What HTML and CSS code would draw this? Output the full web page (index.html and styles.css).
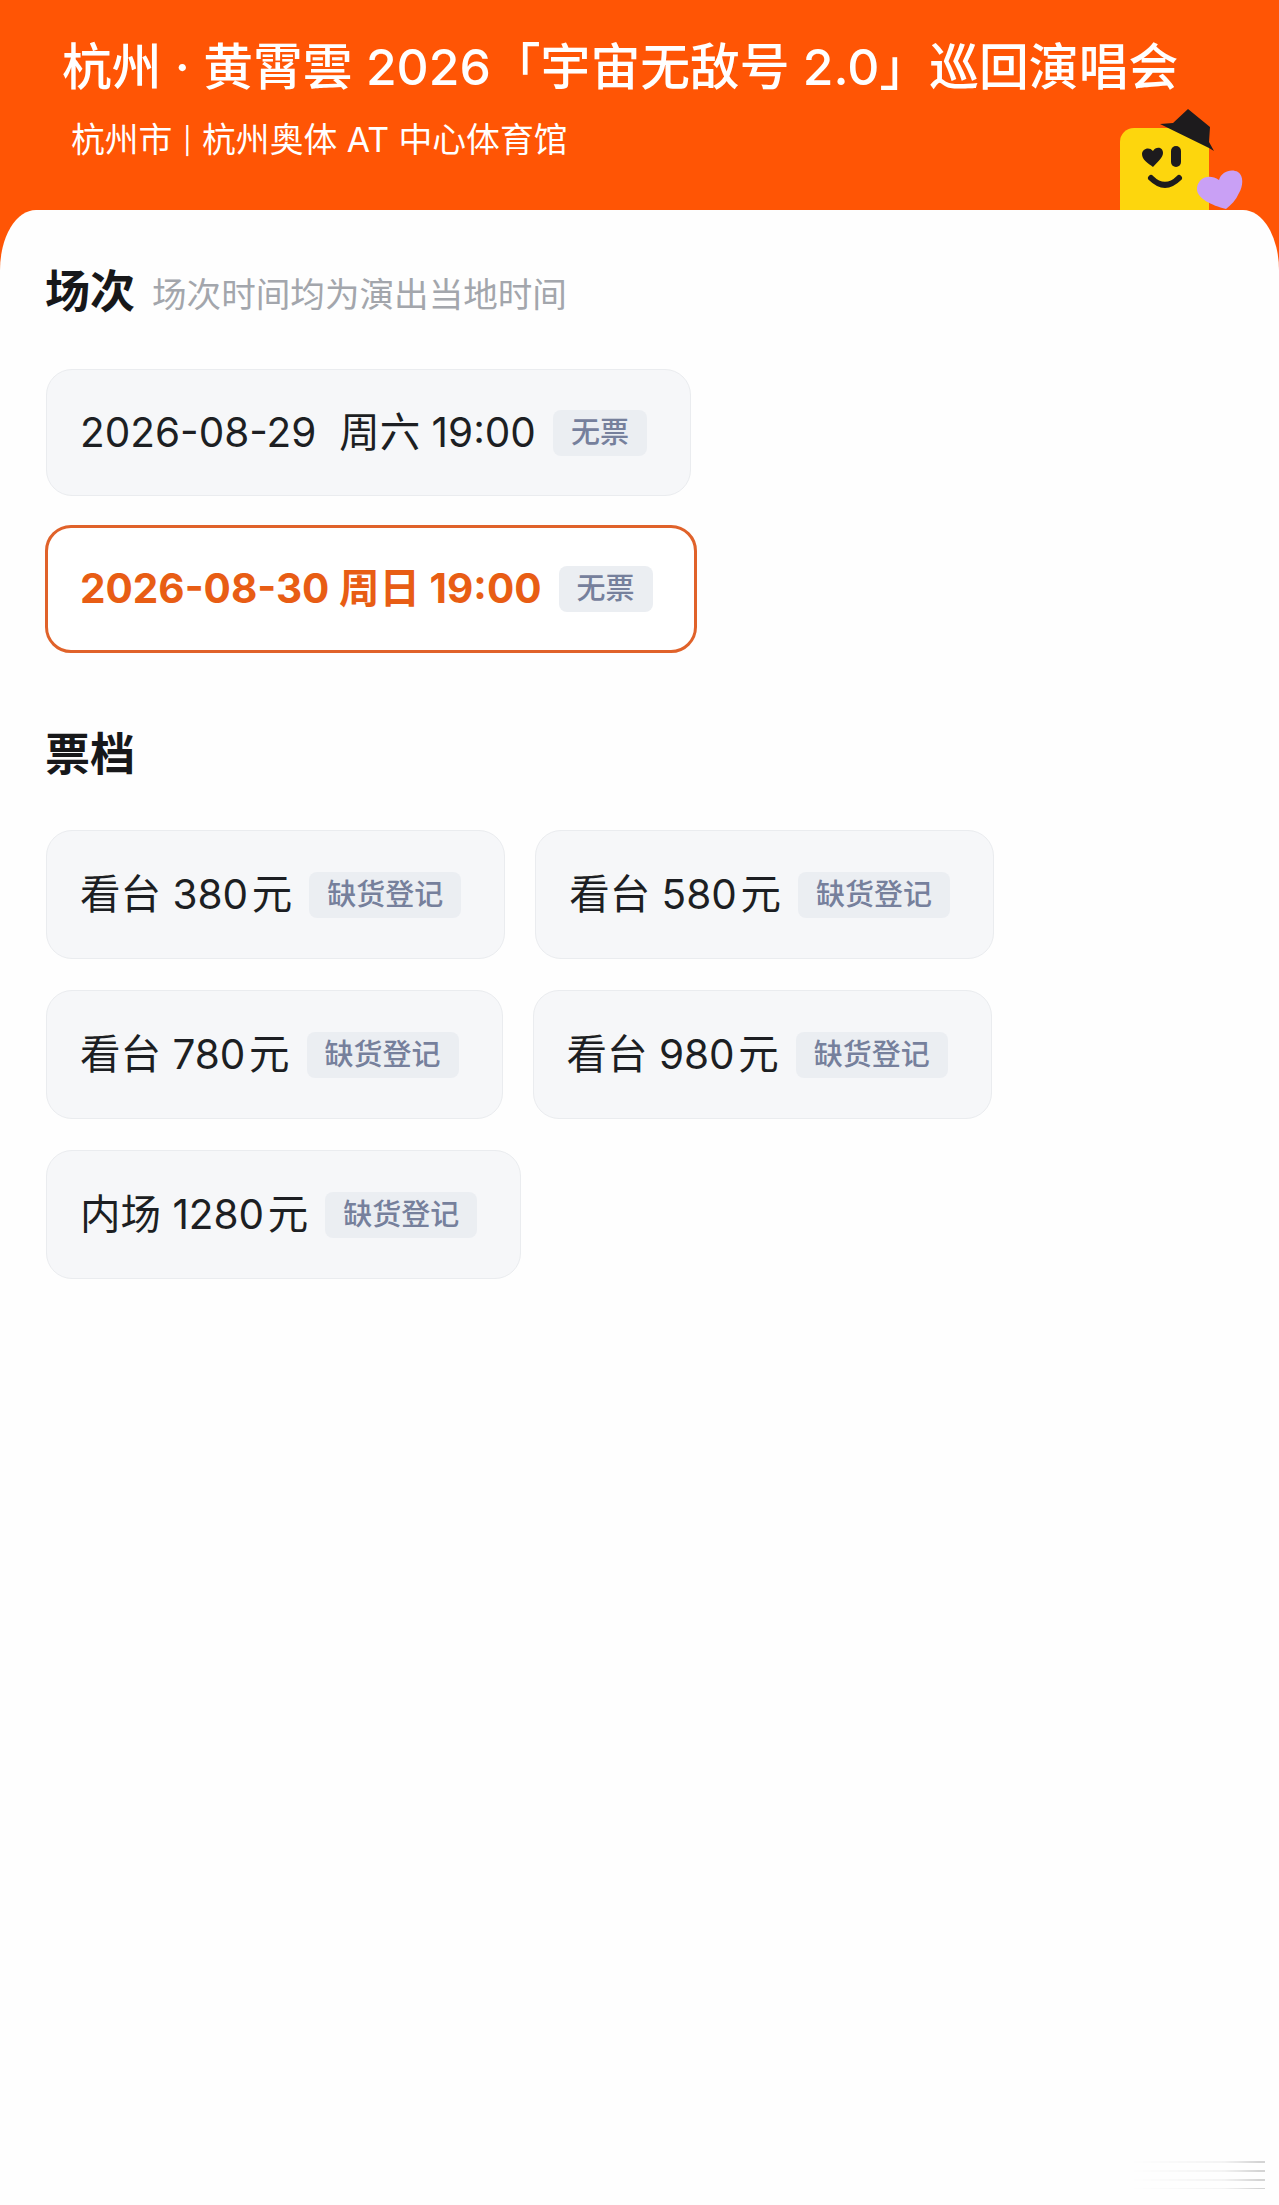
FILE: index.html
```html
<!DOCTYPE html>
<html lang="zh-CN">
<head>
    <meta charset="UTF-8">
    <meta name="viewport" content="width=device-width, initial-scale=1.0">
    <title>杭州 · 黄霄雲 2026「宇宙无敌号 2.0」巡回演唱会</title>
    <link rel="stylesheet" href="styles.css">
</head>
<body>
<div class="header">
    <h1 class="header-title">杭州 · 黄霄雲 2026「宇宙无敌号 2.0」巡回演唱会</h1>
    <p class="header-venue">杭州市 <span class="divider">|</span> 杭州奥体 AT 中心体育馆</p>
    <svg class="mascot" viewBox="0 0 124 110" aria-hidden="true">
        <rect x="1" y="20" width="89" height="110" rx="14" fill="#fdd60d"/>
        <path d="M41 16 L54 15 L69 1 L91 19 L90 34 L95 43 L90 40 Z" fill="#1d1b1d"/>
        <path d="M34 59 C29 55 23 52 23 46 C23 41 30 38 34 43 C37 38 44 39 44 45 C44 50 38 54 34 59 Z" fill="#1d1b1d"/>
        <rect x="52" y="38" width="10" height="21" rx="5" fill="#1d1b1d"/>
        <path d="M32 70 Q46 84 60 70" fill="none" stroke="#1d1b1d" stroke-width="6" stroke-linecap="round"/>
        <path d="M107 101 C92 97 77 90 78 80 C79 70 90 65 100 72 C102 64 112 60 119 64 C125 68 124 78 120 85 C117 92 112 97 107 101 Z" fill="#c9a0f5"/>
    </svg>
</div>

<div class="panel">
    <div class="section-head">
        <h2>场次</h2>
        <span class="section-note">场次时间均为演出当地时间</span>
    </div>
    <div class="session-list">
        <div class="option">
            <span class="option-text">2026-08-29&nbsp; 周六 19:00</span>
            <span class="tag">无票</span>
        </div>
        <div class="option selected">
            <span class="option-text">2026-08-30 周日 19:00</span>
            <span class="tag">无票</span>
        </div>
    </div>

    <div class="section-head tickets-head">
        <h2>票档</h2>
    </div>
    <div class="ticket-list">
        <div class="option">
            <span class="option-text">看台 380&#8202;元</span>
            <span class="tag">缺货登记</span>
        </div>
        <div class="option">
            <span class="option-text">看台 580&#8202;元</span>
            <span class="tag">缺货登记</span>
        </div>
        <div class="option">
            <span class="option-text">看台 780&#8202;元</span>
            <span class="tag">缺货登记</span>
        </div>
        <div class="option">
            <span class="option-text">看台 980&#8202;元</span>
            <span class="tag">缺货登记</span>
        </div>
        <div class="option">
            <span class="option-text">内场 1280&#8202;元</span>
            <span class="tag">缺货登记</span>
        </div>
    </div>
    <div class="watermark"></div>
</div>
</body>
</html>
```

FILE: styles.css
```css
body {
    font-family: 'Inter', 'Noto Sans CJK SC', sans-serif;
    margin: 0;
    padding: 0;
    background-color: #ff5505;
    color: #1d1f23;
    overflow: hidden;
}
.header {
    height: 210px;
    box-sizing: border-box;
    padding: 37px 0 0 62px;
    position: relative;
    color: #fff;
}
.header-title {
    margin: 0;
    font-size: 49.8px;
    line-height: 60px;
    font-weight: 500;
    white-space: nowrap;
}
.header-venue {
    margin: 20px 0 0 9px;
    font-size: 33.8px;
    line-height: 46px;
    font-weight: 400;
    white-space: nowrap;
}
.divider {
    margin: 0 1px;
    font-size: 26px;
    vertical-align: 2px;
}
.mascot {
    position: absolute;
    left: 1119px;
    top: 108px;
    width: 124px;
    height: 110px;
    overflow: hidden;
}
.panel {
    position: relative;
    height: 1995px;
    box-sizing: border-box;
    padding: 52px 0 0 46px;
    background-color: #fefefe;
    border-radius: 36px 36px 0 0 / 60px 60px 0 0;
}
.section-head {
    display: flex;
    align-items: center;
    height: 60px;
    margin-left: -1px;
}
.section-head h2 {
    margin: 0;
    font-size: 45px;
    line-height: 60px;
    font-weight: 700;
    color: #17181a;
}
.section-note {
    margin-left: 17px;
    font-size: 34.6px;
    color: #a3a6ac;
}
.session-list {
    margin-top: 47px;
    display: flex;
    flex-direction: column;
    align-items: flex-start;
    gap: 29px;
}
.tickets-head {
    margin-top: 72px;
}
.ticket-list {
    margin-top: 45px;
    display: flex;
    flex-wrap: wrap;
    gap: 31px 30px;
}
.option {
    display: flex;
    align-items: center;
    height: 129px;
    box-sizing: border-box;
    padding: 0 43px 0 33px;
    background-color: #f6f7f9;
    border: 1px solid #eaecef;
    border-radius: 26px;
    white-space: nowrap;
}
.session-list .option {
    height: 127px;
}
.option-text {
    font-size: 40.5px;
    padding-bottom: 7px;
}
.tag {
    margin-left: 17px;
    padding: 0 18px;
    height: 46px;
    line-height: 46px;
    font-size: 29px;
    font-weight: 500;
    color: #76809c;
    background-color: #ebeef2;
    border-radius: 8px;
}
.session-list .selected {
    height: 128px;
    margin-left: -1px;
    background-color: #fff;
    border: 3px solid #e0622a;
    padding-left: 32px;
    padding-right: 41px;
}
.selected .option-text {
    color: #e85d14;
    font-weight: 700;
}
.watermark {
    position: absolute;
    right: 14px;
    bottom: 16px;
    width: 135px;
    height: 28px;
    background: repeating-linear-gradient(180deg, #d4d4d4 0, #d4d4d4 2px, transparent 2px, transparent 9px);
    -webkit-mask-image: linear-gradient(90deg, transparent, rgba(0, 0, 0, 0.25) 70%, #000 95%);
    mask-image: linear-gradient(90deg, transparent, rgba(0, 0, 0, 0.25) 70%, #000 95%);
}
```
